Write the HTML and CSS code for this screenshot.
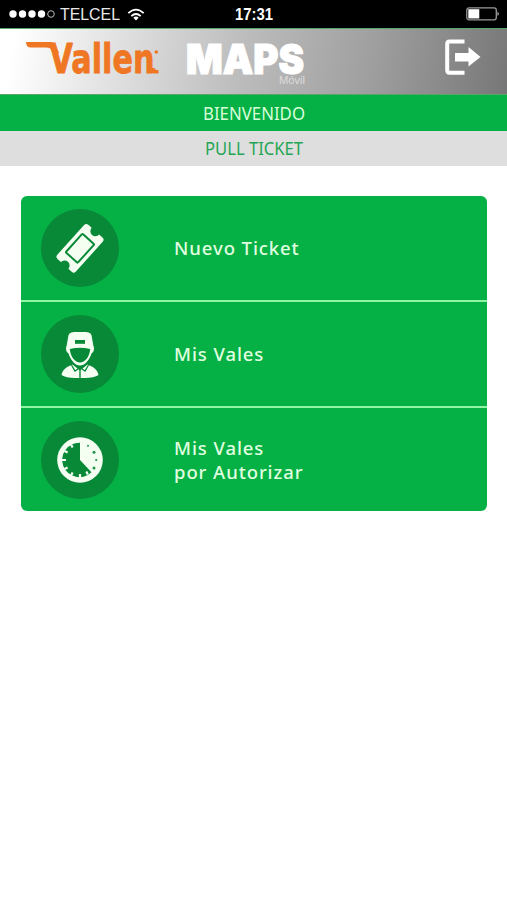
FILE: index.html
```html
<!DOCTYPE html>
<html lang="es">
<head>
<meta charset="utf-8">
<title>Vallen MAPS Móvil</title>
<link rel="stylesheet" href="styles.css">
</head>
<body>
<div class="status">
  <div class="carrier">
    <svg class="signal" width="46" height="10" viewBox="0 0 46 10"><g fill="#fff"><circle cx="4" cy="5" r="3.7"/><circle cx="13.5" cy="5" r="3.7"/><circle cx="23" cy="5" r="3.7"/><circle cx="32.5" cy="5" r="3.7"/></g><circle cx="42" cy="5" r="3.3" fill="none" stroke="#bbb"/></svg>
    <svg class="telcel" width="60" height="20"><text x="-1" y="16" textLength="60" lengthAdjust="spacingAndGlyphs">TELCEL</text></svg>
    <svg width="18" height="13" viewBox="0 0 18 13"><g fill="none" stroke="#fff" stroke-width="1.8"><path d="M1.3 5.2Q9 -2 16.7 5.2"/><path d="M4.3 8.1Q9 3.8 13.7 8.1"/></g><path d="M6.3 9.8Q9 7.4 11.7 9.8L9 12.6Z" fill="#fff"/></svg>
  </div>
  <svg class="time" width="40" height="20"><text x="0" y="16" textLength="38" lengthAdjust="spacingAndGlyphs">17:31</text></svg>
  <svg class="battery" width="35" height="14" viewBox="0 0 35 14"><rect x=".8" y=".8" width="29.5" height="12" rx="2.2" fill="#000" stroke="#999" stroke-width="1.3"/><rect x="2.3" y="2.2" width="11" height="9.3" fill="#fff"/><path d="M31.5 4.5Q34.2 6.8 31.5 9Z" fill="#bbb"/></svg>
</div>
<header class="header">
  <svg class="vallen" width="135" height="38" viewBox="0 0 135 38">
    <path d="M0 4H24Q28 4 30 8L33 15H27L25 11.5Q24 9.5 20 9.5H5Q0 9.5 0 4Z"/>
    <text x="23.5" y="35" textLength="105" lengthAdjust="spacingAndGlyphs">Vallen</text>
    <path d="M123.5 30H128.5Q129 32.2 132.5 32.2V35.5H128.5Q123.5 35.5 123.5 30Z"/><circle cx="130.3" cy="14" r="1.8"/>
  </svg>
  <svg class="maps" width="124" height="52" viewBox="0 0 124 52">
    <text class="maps-name" x="1" y="38" textLength="118" lengthAdjust="spacingAndGlyphs">MAPS</text>
    <text class="maps-sub" x="94" y="48" textLength="26" lengthAdjust="spacingAndGlyphs">Móvil</text>
  </svg>
  <svg class="logout" width="38" height="38" viewBox="0 0 38 38"><path d="M21.5 3.5H6.5Q4.2 3.5 4.2 6V32Q4.2 34.7 6.5 34.7H21.5" fill="none" stroke="#fff" stroke-width="4"/><path d="M12 15H25.5V9L37.5 19L25.5 28.5V23.5H12Z" fill="#fff"/></svg>
</header>
<div class="band welcome"><svg width="104" height="24"><text x="1" y="19" textLength="102" lengthAdjust="spacingAndGlyphs">BIENVENIDO</text></svg></div>
<div class="band section"><svg width="104" height="24"><text x="3" y="18" textLength="98" lengthAdjust="spacingAndGlyphs">PULL TICKET</text></svg></div>
<main class="menu">
  <div class="item">
    <div class="disc">
      <svg width="78" height="78" viewBox="0 0 78 78"><g transform="translate(39 39.3) rotate(-48)"><path d="M-20 -12.5H20Q23 -12.5 23 -9.5V-5A5 5 0 0 0 23 5V9.5Q23 12.5 20 12.5H-20Q-23 12.5 -23 9.5V5A5 5 0 0 0 -23 -5V-9.5Q-23 -12.5 -20 -12.5Z" fill="#f4fff2"/><rect x="-12.5" y="-8" width="25" height="16" rx="1" fill="none" stroke="#078938" stroke-width="2"/></g></svg>
    </div>
    <span class="label">Nuevo Ticket</span>
  </div>
  <div class="item">
    <div class="disc">
      <svg width="78" height="78" viewBox="0 0 78 78"><path d="M26 31Q23.5 35.5 27.5 38.5C30 46 34.5 50.5 39 50.5C43.5 50.5 48 46 50.5 38.5Q54.5 35.5 52 31Z" fill="#f4fff2"/><path d="M28.8 34Q39 31.5 49.2 34C48.5 42 44 47.5 39 47.5C34 47.5 29.5 42 28.8 34Z" fill="#078938"/><path d="M27 23Q27 17 33 17H45Q51 17 51 23L53 34Q39 30 25 34Z" fill="#f4fff2"/><rect x="34" y="25" width="10" height="3.8" fill="#078938"/><path d="M20.5 60C21.5 54 26 52 31.5 49.5L38.3 55V63H34Q25 63 20.5 60Z" fill="#f4fff2"/><path d="M57.5 60C56.5 54 52 52 46.5 49.5L39.7 55V63H44Q53 63 57.5 60Z" fill="#f4fff2"/><path d="M30.5 50L34 56L39 52.5L44 56L47.5 50" fill="none" stroke="#078938" stroke-width="1.3"/></svg>
    </div>
    <span class="label">Mis Vales</span>
  </div>
  <div class="item">
    <div class="disc">
      <svg width="78" height="78" viewBox="0 0 78 78"><circle cx="39" cy="39" r="22.8" fill="#f4fff2"/><path d="M39 39V21.8A17.2 17.2 0 1 0 50.5 51.2Z" fill="#078938"/><g stroke="#f4fff2" stroke-width="2.2"><path d="M30 23.5L31.6 26.6M23.5 30L26.6 31.6M21 39H25M23.5 48L26.6 46.4M30 54.5L31.6 51.4M39 57V53M46.8 53.5L45.3 50.5"/></g><g fill="#23944a"><circle cx="47" cy="24.8" r="1"/><circle cx="53" cy="31.3" r="1.5"/><circle cx="55.2" cy="39" r="1.1"/><circle cx="53" cy="47" r="1.5"/></g></svg>
    </div>
    <span class="label">Mis Vales<br>por Autorizar</span>
  </div>
</main>
</body>
</html>
```
FILE: styles.css
```css
* { box-sizing: border-box; }
body { margin: 0; background: #fff; font-family: "Noto Sans", sans-serif; }
svg { display: block; flex: none; overflow: visible; }

.status {
  display: grid;
  grid-template-columns: 1fr 40px 1fr;
  align-items: center;
  height: 28px;
  padding: 0 6px 0 9px;
  background: #000;
  fill: #fff;
  font-family: "Liberation Sans", sans-serif;
  font-size: 17px;
}
.carrier { display: flex; align-items: center; gap: 6px; }
.telcel { fill: #e8e8e8; }
.time { font-weight: bold; font-size: 16px; }
.battery { justify-self: end; }

.header {
  display: flex;
  height: 67px;
  padding-left: 26px;
  border-top: 1px solid #55a968;
  border-bottom: 1px solid #58a66a;
  background: linear-gradient(100deg, #fff 3%, #dedede 25%, #bcbcbc 48%, #a0a0a0 72%, #777 100%);
}
.vallen { margin-top: 9px; fill: #ef7623; font: bold 41px "DejaVu Sans", sans-serif; }
.vallen text { stroke: #ef7623; stroke-width: .8px; stroke-linejoin: round; }
.maps { margin: 7px 0 0 24px; fill: #fff; }
.maps-name { font: 900 41px Inter, sans-serif; stroke: #fff; stroke-width: 1.2px; }
.maps-sub { font: 10px "Liberation Sans", sans-serif; fill: #ddd; }
.logout { margin: 9px 26px 0 auto; }

.band { display: flex; justify-content: center; align-items: center; font-size: 18px; }
.welcome { height: 36px; background: #05b044; fill: #d8ffd9; }
.section { height: 35px; background: #dedede; fill: #25a654; }

.menu {
  margin: 30px 20px 0 21px;
  border-radius: 6px;
  overflow: hidden;
  background: #05b044;
}
.item { display: flex; align-items: center; height: 104px; padding-left: 20px; }
.item + .item { height: 106px; border-top: 2px solid #91f5a5; }
.item:last-child { height: 105px; }
.disc { width: 78px; height: 78px; border-radius: 50%; background: #078938; }
.label {
  margin-left: 55px;
  color: #e0ffe0;
  font-size: 18.5px;
  font-weight: 500;
  line-height: 24px;
  letter-spacing: .92px;
}
```
